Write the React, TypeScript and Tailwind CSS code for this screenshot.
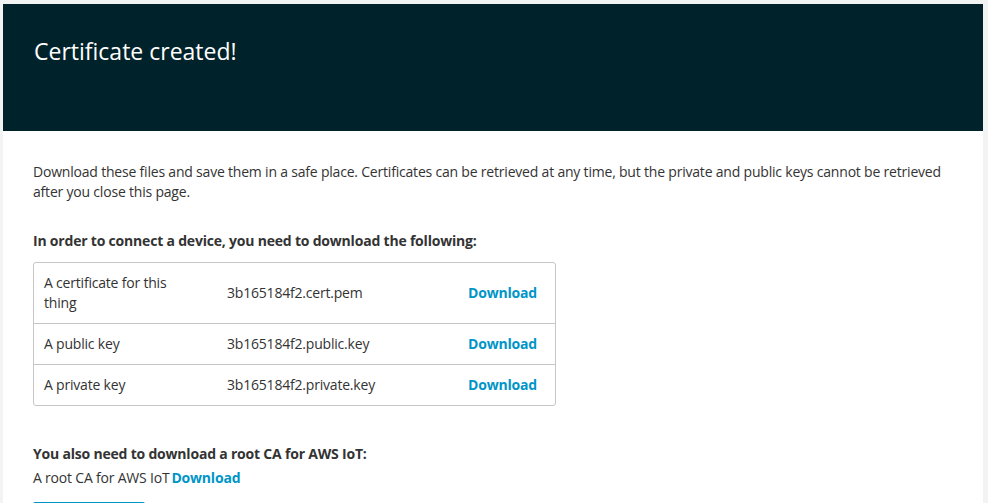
const files = [
  { label: 'A certificate for this thing', file: '3b165184f2.cert.pem', tall: true },
  { label: 'A public key', file: '3b165184f2.public.key' },
  { label: 'A private key', file: '3b165184f2.private.key' },
];

export default function App() {
  return (
    <div className="min-h-[503px] bg-[#f2f3f3] pl-[3px] pr-[5px] pt-[4px] font-['Open_Sans',sans-serif] text-[#16191f]">
      <div className="bg-white">
        <header className="h-[127px] bg-[#00222b] px-[31px] pt-[32px]">
          <h1 className="text-[23px] leading-[30px] text-white">Certificate created!</h1>
        </header>
        <main className="px-[30px] pb-[8px] pt-[31px] text-[14px] leading-[20px] tracking-[-0.2px] text-[#333]">
          <p>
            Download these files and save them in a safe place. Certificates can be retrieved at any time, but the private
            and public keys cannot be retrieved after you close this page.
          </p>
          <h3 className="mt-[29px] font-bold">In order to connect a device, you need to download the following:</h3>
          <div className="mt-[11px] w-[523px] rounded-[3px] border border-[#c6c6c6]">
            {files.map((f, i) => (
              <div
                key={f.file}
                className={`flex items-center ${i > 0 ? 'border-t border-[#c6c6c6] h-[41px]' : 'h-[60px]'}`}
              >
                <div className="w-[193px] pl-[10px] pr-[45px]">{f.label}</div>
                <div className="w-[241px]">{f.file}</div>
                <a href="#" className="font-bold text-[#0095c8]">Download</a>
              </div>
            ))}
          </div>
          <h3 className="mt-[38px] font-bold">You also need to download a root CA for AWS IoT:</h3>
          <p className="mt-[4px]">
            A root CA for AWS IoT<a href="#" className="ml-[2px] font-bold text-[#0095c8]">Download</a>
          </p>
          <div className="mt-[14px] h-[10px] w-[112px] rounded-t-[2px] bg-[#0095c8]" />
        </main>
      </div>
    </div>
  );
}
